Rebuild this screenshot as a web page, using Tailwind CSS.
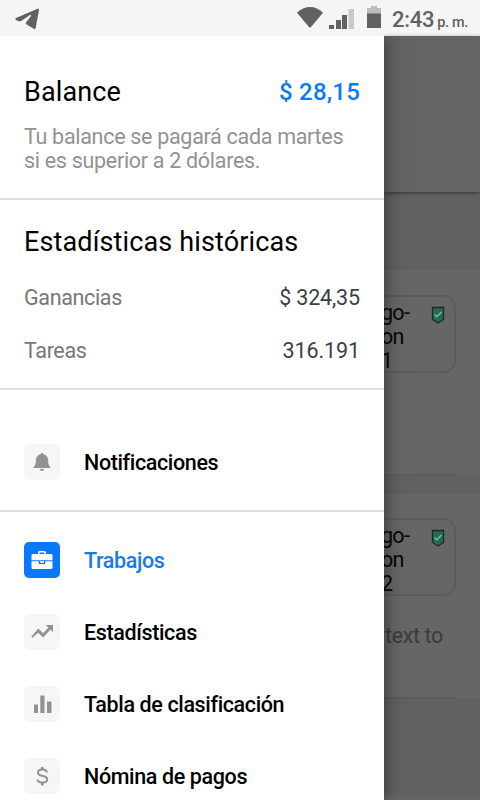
<!DOCTYPE html>
<html lang="es">
<head>
<meta charset="utf-8">
<meta name="viewport" content="width=device-width, initial-scale=1">
<title>Balance</title>
<script src="https://cdn.jsdelivr.net/npm/@tailwindcss/browser@4"></script>
</head>
<body class="h-[800px] w-[480px] overflow-hidden bg-white font-[Roboto,sans-serif] text-black">
<header class="flex h-9 items-center bg-[#f5f5f5] text-[#616161]">
  <svg class="ml-[14px] h-[24px] w-[26px]" viewBox="0 0 26 24" fill="currentColor"><path d="M2 12.100 23.500 2.800q1.700-.5 1.500 1.300L21.700 22q-.4 1.500-1.900.8L12.300 18.300q-1-.8-.3-1.800l5-6.600q.5-1.400-1-.8L7.200 15q-1 .6-2.200.2l-3.200-1.300q-1.200-.8.2-1.800Z"/></svg>
  <svg class="ml-[256px] h-6 w-7" viewBox="0 0 28 24" fill="currentColor"><path d="M1 6.800Q7 1 14 1t13 5.800L14.800 21.200q-.8.8-1.600 0Z"/></svg>
  <svg class="ml-[4px] h-6 w-7" viewBox="0 0 28 24" fill="currentColor"><path d="M1 19h5v4H1ZM8 14h5v9H8ZM14 9h5v14h-5Z"/><path fill="#c9c9c9" d="M20.500 3H26v20h-5.500Z"/></svg>
  <svg class="ml-[10px] h-6 w-4" viewBox="0 0 16 24" fill="currentColor"><path fill="#bdbdbd" d="M5 0h6v2h4v6H1V2h4Z"/><path d="M1 7.500h14V22H1Z"/></svg>
  <span class="ml-[10px] flex items-baseline whitespace-nowrap pt-[3px] font-medium"><span class="text-[22px] tracking-[-.3px]">2:43</span><span class="ml-[3px] text-[14.500px] tracking-[-.3px]">p. m.</span></span>
</header>
<div class="flex h-[764px]">
  <aside class="z-10 w-96 shrink-0 bg-white shadow-[0_0_18px_rgba(0,0,0,.5)] [clip-path:inset(0_-30px_0_0)]">
    <section class="h-[164px] border-b-2 border-[#dedede] px-6 pt-10">
      <div class="flex h-8 items-center justify-between">
        <h1 class="text-[27px] tracking-[.13px]">Balance</h1>
        <span class="text-[24px] font-medium tracking-[.2px] text-[#097aff]">$ 28,15</span>
      </div>
      <p class="mt-[17px] whitespace-nowrap text-[21.500px] leading-6 tracking-[-.3px] text-[#929292]">Tu balance se pagará cada martes<br>si es superior a 2 dólares.</p>
    </section>
    <section class="h-[190px] border-b-2 border-[#dedede] px-6 pt-[26px]">
      <h2 class="text-[27px] leading-8 tracking-[.13px]">Estadísticas históricas</h2>
      <div class="mt-[28px] flex h-6 items-center justify-between text-[21.500px] leading-6"><span class="tracking-[-.35px] text-[#777]">Ganancias</span><span class="tracking-[-.15px] text-[#3b3f48]">$ 324,35</span></div>
      <div class="mt-[29px] flex h-6 items-center justify-between text-[21.500px] leading-6"><span class="tracking-[-.35px] text-[#777]">Tareas</span><span class="tracking-[-.1px] text-[#3b3f48]">316.191</span></div>
    </section>
    <nav class="text-[21.500px] font-medium tracking-[-.37px]">
      <a class="flex h-[122px] items-start gap-6 border-b-2 border-[#dedede] px-6 pt-[54px]">
        <span class="flex size-9 items-center justify-center rounded-[5px] bg-[#f6f6f6] text-[#929292]"><svg class="size-6" viewBox="0 0 24 24" fill="currentColor"><path d="M12 3a1.300 1.300 0 0 1 1.300 1.300q4.900 1 4.900 7 0 4.200 2.200 5.700V18H3.600v-1q2.200-1.500 2.200-5.700 0-6 4.900-7A1.300 1.300 0 0 1 12 3ZM9.700 19h4.600q-.4 2-2.300 2t-2.300-2Z"/></svg></span>
        <span class="leading-[38px]">Notificaciones</span>
      </a>
      <div class="flex flex-col gap-9 px-6 pt-[30px]">
        <a class="flex h-9 gap-6 text-[#1779ed]">
          <span class="flex size-9 items-center justify-center rounded-[5px] bg-[#0879ff]"><svg class="size-6" viewBox="0 0 24 24" fill="#fff"><path fill-rule="evenodd" d="M8 6V4.500Q8 3 9.500 3h5Q16 3 16 4.500V6h5q1.500 0 1.500 1.500v4.800h-21V7.500Q1.500 6 3 6Zm1.500 0h5V4.500h-5ZM1.500 13.200h7.300V16h6.400v-2.800h7.300v6.300q0 1.500-1.500 1.500H3q-1.500 0-1.500-1.500Z"/><path d="M10 13.200h4v1.600h-4Z"/></svg></span>
          <span class="leading-[38px]">Trabajos</span>
        </a>
        <a class="flex h-9 gap-6">
          <span class="flex size-9 items-center justify-center rounded-[5px] bg-[#f6f6f6] text-[#929292]"><svg class="size-6" viewBox="0 0 24 24" fill="currentColor"><path d="M15.800 5H23v7.200l-2.600-2.600-7.200 8-5-4.900-5.800 5.100-1.100-1 6.900-8.300 5 4.700 5.200-5.600Z"/></svg></span>
          <span class="leading-[38px]">Estadísticas</span>
        </a>
        <a class="flex h-9 gap-6">
          <span class="flex size-9 items-center justify-center rounded-[5px] bg-[#f6f6f6] text-[#929292]"><svg class="size-6" viewBox="0 0 24 24" fill="currentColor"><path d="M4 12.500h4V21H4ZM10.300 3.500h4.200V21h-4.200ZM17 9.500h4.500V21H17Z"/></svg></span>
          <span class="leading-[38px]">Tabla de clasificación</span>
        </a>
        <a class="flex h-9 gap-6">
          <span class="flex size-9 items-center justify-center rounded-[5px] bg-[#f6f6f6] text-[#929292]"><svg class="size-6" viewBox="0 0 24 24" fill="none" stroke="currentColor" stroke-width="2"><path d="M17 8.500Q16.500 5.500 12.300 5.500 8 5.500 8 8.700q0 2.200 4.300 3.100 4.900 1 4.900 3.600 0 3.100-4.900 3.100-4.600 0-4.900-3.200"/><path stroke-width="2.600" d="M12.300 3v3M12.300 18v3.500"/></svg></span>
          <span class="leading-[38px]">Nómina de pagos</span>
        </a>
      </div>
    </nav>
  </aside>
  <main class="w-24 bg-[#616163] text-[21.500px] leading-6 tracking-[-.4px] text-[#080808]">
    <div class="h-[156px] bg-[#646464] shadow-[0_1px_4px_rgba(0,0,0,.45)]"></div>
    <section class="mt-[78px] h-[206px] bg-[#666] pt-[25px]">
      <div class="-ml-5 flex h-[78px] w-[92px] items-start justify-between rounded-[12px] border-2 border-[#5c5c5c] pl-[15px] pr-[9px] pt-[4px]">
        <p class="tracking-[-.7px]">go-<br>on<br>1</p>
        <svg class="mt-[5px] h-[19px] w-[14px] shrink-0" viewBox="0 0 14 19"><path d="M1.500 1.500h11v12L7 17l-5.500-3.500Z" fill="#226c55" stroke="#202825" stroke-width="1.300"/><path d="m3.500 8.500 2.300 2.300L10.500 6" fill="none" stroke="#8bb2a4" stroke-width="1.400"/></svg>
      </div>
      <div class="mt-[101px] h-[2px] w-[72px] bg-[#5d5d5d]"></div>
    </section>
    <section class="mt-[18px] h-[204px] bg-[#666] pt-[24px]">
      <div class="-ml-5 flex h-[78px] w-[92px] items-start justify-between rounded-[12px] border-2 border-[#5c5c5c] pl-[15px] pr-[9px] pt-[4px]">
        <p class="tracking-[-.7px]">go-<br>on<br>2</p>
        <svg class="mt-[5px] h-[19px] w-[14px] shrink-0" viewBox="0 0 14 19"><path d="M1.500 1.500h11v12L7 17l-5.500-3.500Z" fill="#226c55" stroke="#202825" stroke-width="1.300"/><path d="m3.500 8.500 2.300 2.300L10.500 6" fill="none" stroke="#8bb2a4" stroke-width="1.400"/></svg>
      </div>
      <p class="mt-[28px] whitespace-nowrap pl-px text-[#3b3b3b]">text to</p>
      <div class="mt-[49px] h-[2px] w-[72px] bg-[#5d5d5d]"></div>
    </section>
    <div class="mt-[98px] h-1 bg-[#666]"></div>
  </main>
</div>
</body>
</html>
